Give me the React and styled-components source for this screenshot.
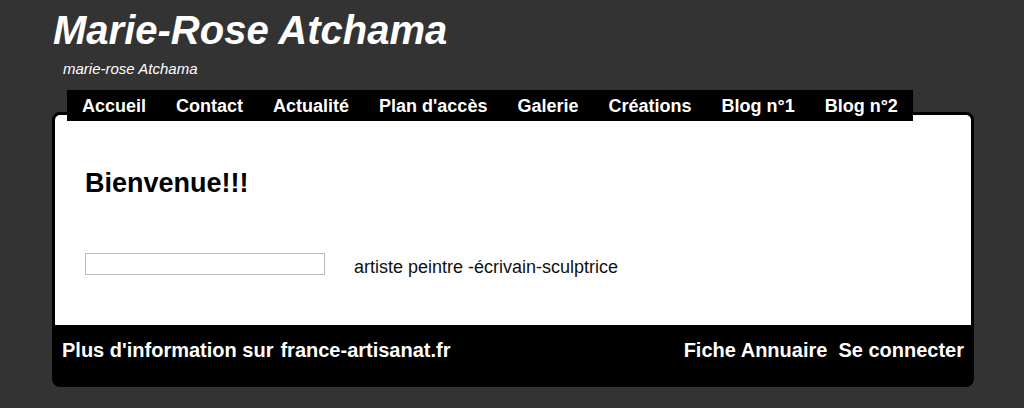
import React from "react";
import styled, { createGlobalStyle } from "styled-components";

const GlobalStyle = createGlobalStyle`
  body {
    margin: 0;
    background: #333333;
    font-family: "Liberation Sans", Arial, sans-serif;
  }
`;

const menu = [
  "Accueil",
  "Contact",
  "Actualité",
  "Plan d'accès",
  "Galerie",
  "Créations",
  "Blog n°1",
  "Blog n°2",
];

const App = () => {
  return (
    <>
      <GlobalStyle />
      <Page>
        <Header>
          <Title>Marie-Rose Atchama</Title>
          <Subtitle>marie-rose Atchama</Subtitle>
        </Header>
        <Nav>
          {menu.map((item) => (
            <NavItem key={item}>{item}</NavItem>
          ))}
        </Nav>
        <Box>
          <Content>
            <Welcome>Bienvenue!!!</Welcome>
            <Row>
              <Field type="text" />
              <Tagline>artiste peintre -écrivain-sculptrice</Tagline>
            </Row>
          </Content>
          <Footer>
            <FooterGroup>
              <FooterLink>Plus d'information sur</FooterLink>
              <FooterLink>france-artisanat.fr</FooterLink>
            </FooterGroup>
            <FooterGroup $gap={11}>
              <FooterLink>Fiche Annuaire</FooterLink>
              <FooterLink>Se connecter</FooterLink>
            </FooterGroup>
          </Footer>
        </Box>
      </Page>
    </>
  );
};

export default App;

const Page = styled.div`
  width: 922px;
  margin-left: 52px;
`;

const Header = styled.header`
  height: 90px;
`;

const Title = styled.h1`
  margin: 0;
  padding-top: 6px;
  font-size: 40px;
  line-height: 48px;
  font-style: italic;
  font-weight: bold;
  color: #fff;
  margin-left: 1px;
`;

const Subtitle = styled.div`
  margin: 6px 0 0 11px;
  font-size: 15px;
  line-height: 18px;
  font-style: italic;
  color: #fff;
`;

const Nav = styled.nav`
  position: relative;
  z-index: 1;
  display: flex;
  width: fit-content;
  margin-left: 15px;
  margin-bottom: -9px;
  background: #000;
`;

const NavItem = styled.a`
  padding: 2px 15px 0;
  font-size: 18px;
  font-weight: bold;
  line-height: 29px;
  color: #fff;
  cursor: pointer;
`;

const Box = styled.div`
  border: 3px solid #000;
  border-radius: 8px;
  background: #000;
  overflow: hidden;
`;

const Content = styled.div`
  background: #fff;
  height: 210px;
  padding: 0 30px;
  box-sizing: border-box;
  padding-top: 52px;
`;

const Welcome = styled.h2`
  margin: 0;
  font-size: 27px;
  line-height: 32px;
  font-weight: bold;
  color: #000;
`;

const Row = styled.div`
  display: flex;
  align-items: center;
  margin-top: 57px;
  gap: 29px;
`;

const Field = styled.input`
  width: 240px;
  height: 22px;
  box-sizing: border-box;
  border: 1px solid #bbb;
  margin: 0;
  position: relative;
  top: -3px;
`;

const Tagline = styled.span`
  font-size: 18px;
  color: #111;
`;

const Footer = styled.footer`
  display: flex;
  justify-content: space-between;
  height: 59px;
  padding: 13px 7px 0;
  box-sizing: border-box;
`;

const FooterGroup = styled.div`
  display: flex;
  gap: ${(p) => p.$gap || 7}px;
`;

const FooterLink = styled.a`
  font-size: 20px;
  font-weight: bold;
  line-height: 24px;
  color: #fff;
  cursor: pointer;
`;
